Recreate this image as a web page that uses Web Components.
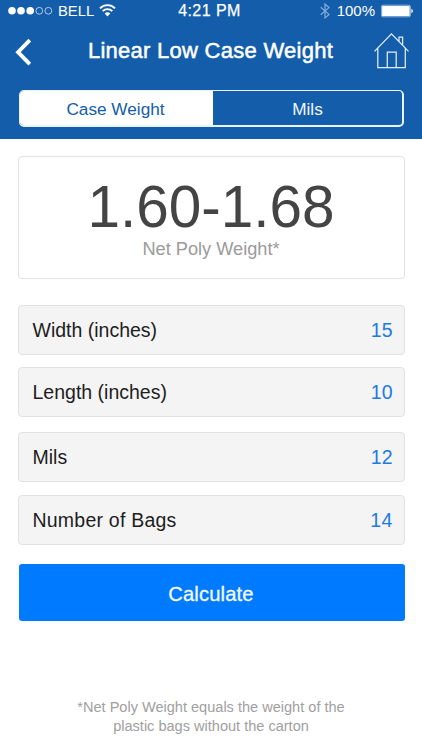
<!DOCTYPE html>
<html lang="en">
<head>
<meta charset="utf-8">
<title>Linear Low Case Weight</title>
<style>
  html, body { margin: 0; height: 100%; }
  body { background: #fff; font-family: "Liberation Sans", Arial, Helvetica, sans-serif; }
</style>
</head>
<body>
<case-weight-app></case-weight-app>
<script>
  function define(name, html) {
    const template = document.createElement('template');
    template.innerHTML = html;
    customElements.define(name, class extends HTMLElement {
      constructor() {
        super();
        this.attachShadow({ mode: 'open' }).append(template.content.cloneNode(true));
      }
    });
  }

  define('status-bar', `
    <style>
      :host { display: grid; grid-template-columns: 1fr auto 1fr; align-items: center; height: 20px; padding: 0 9px 0 8px; color: #fff; font-size: 15px; line-height: 20px; }
      svg { display: block; }
      .left, .right { display: flex; align-items: center; }
      .right { justify-content: flex-end; }
      .carrier { margin: 0 5px 0 5px; font-size: 14.8px; }
      .time { margin-right: 2px; padding-top: 1px; font-size: 16px; letter-spacing: .45px; -webkit-text-stroke: .25px #fff; }
      .percent { margin: 0 6px 0 7px; letter-spacing: 0; padding-top: 1px; }
    </style>
    <div class="left">
      <svg width="45" height="20" viewBox="0 0 45 20" fill="#fff">
        <circle cx="4" cy="9.8" r="3.8"/><circle cx="13" cy="9.8" r="3.8"/><circle cx="22.2" cy="9.8" r="3.8"/>
        <g fill="none" stroke="#d5e3f3" stroke-width=".8"><circle cx="31.3" cy="9.8" r="3.4"/><circle cx="40.4" cy="9.8" r="3.4"/></g>
      </svg>
      <span class="carrier">BELL</span>
      <svg width="17" height="20" viewBox="-.5 0 17 20" fill="none" stroke="#fff" stroke-width="1.9">
        <path d="M.5 7.3a10.4 10.4 0 0 1 15 0M3.2 10.1a6.8 6.8 0 0 1 9.6 0"/>
        <path d="M8 15.6 5.2 12.5a4 4 0 0 1 5.6 0z" fill="#fff" stroke="none"/>
      </svg>
    </div>
    <span class="time">4:21 PM</span>
    <div class="right">
      <svg width="10" height="20" viewBox="0 0 10 20" fill="none" stroke="#86add9" stroke-width="1.2"><path d="M.7 6.2 9 13.4 5 17V3l4 3.6L.7 13.8"/></svg>
      <span class="percent">100%</span>
      <svg width="32" height="20" viewBox="0 0 32 20"><rect x=".4" y="4.2" width="29" height="11.6" rx="1.6" fill="none" stroke="#bcd2ec" stroke-width=".8"/><rect x="1.1" y="4.9" width="27.6" height="10.2" rx=".7" fill="#fff"/><path d="M30.4 7.9c2 .6 2 3.6 0 4.2z" fill="#fff"/></svg>
    </div>`);

  define('nav-bar', `
    <style>
      :host { display: grid; grid-template-columns: 40px 1fr 40px; height: 70px; align-items: start; padding: 0 12px 0 15px; color: #fff; }
      svg { display: block; }
      .back { margin-top: 18px; }
      .home { margin-top: 12px; justify-self: end; margin-right: -1px; }
      h1 { margin: 18px 4px 0 0; font-size: 22px; line-height: 25px; font-weight: 400; letter-spacing: .27px; text-align: center; white-space: nowrap; -webkit-text-stroke: .5px #fff; }
    </style>
    <svg class="back" width="18" height="30" viewBox="0 0 18 30" fill="none" stroke="#fff" stroke-width="3.8"><path d="M14.8 2.2 3 14.2 14.8 26.2"/></svg>
    <h1><slot></slot></h1>
    <svg class="home" width="38" height="38" viewBox="0 0 38 38" fill="none" stroke="#e4eefa" stroke-width="1.25"><path d="M1.5 19.4 18.5 1.8 35.5 19.4M4.8 16.4V35.6H32.3V16.4M14.3 35.2V20H23.2V35.2M26 9V5.2H29.6V13"/></svg>`);

  define('segment-control', `
    <style>
      :host { display: grid; grid-template-columns: 193px 1fr; box-sizing: border-box; height: 37px; margin: 0 18px 0 19px; border: solid #eaf2fb; border-width: 1px 2px 2px 1px; border-radius: 5px; overflow: hidden; color: #f3f8ff; font-size: 17.2px; line-height: 36px; text-align: center; }
      .on { background: #fff; color: #135da9; padding-right: 2px; }
    </style>
    <span class="on"><slot name="selected"></slot></span><span><slot name="other"></slot></span>`);

  define('app-header', `
    <style>:host { display: block; box-sizing: border-box; height: 139px; background: #145dab; }</style>
    <slot></slot>`);

  define('result-card', `
    <style>
      :host { display: flex; flex-direction: column; align-items: center; box-sizing: border-box; height: 123px; margin: 17px 17px 26px 18px; border: 1px solid #e2e2e2; border-radius: 4px; padding-top: 18px; }
      .value { color: #444; font-size: 58.5px; line-height: 64px; margin-right: 1px; }
      .label { color: #9b9b9b; font-size: 18.2px; line-height: 20px; margin-right: 1px; }
    </style>
    <span class="value"><slot name="value"></slot></span><span class="label"><slot></slot></span>`);

  define('input-row', `
    <style>
      :host { display: flex; justify-content: space-between; align-items: center; box-sizing: border-box; height: 50px; margin: 0 17px 12px 18px; padding: 0 11.5px 0 13.5px; background: #f4f4f4; border: 1px solid #e2e2e2; border-radius: 4px; font-size: 19.5px; color: #1d1d1d; }
      .value { color: #2079e3; }
    </style>
    <span><slot></slot></span><span class="value"><slot name="value"></slot></span>`);

  define('primary-button', `
    <style>
      :host { display: block; margin: 19px 17px 0 19px; }
      button { display: block; width: 100%; height: 57px; border: 0; border-radius: 3px; padding: 2px 2px 0 0; background: #007aff; color: #f2faff; font: 20.2px/24px "Liberation Sans", Arial, sans-serif; letter-spacing: .15px; -webkit-text-stroke: .3px #f2faff; }
    </style>
    <button><slot></slot></button>`);

  define('foot-note', `
    <style>:host { display: block; margin-top: 77px; color: #a0a0a0; font-size: 14.55px; line-height: 19px; text-align: center; }</style>
    <slot></slot>`);

  define('case-weight-app', `
    <style>
      :host { display: block; width: 422px; height: 750px; overflow: hidden; background: #fff; }
      .gap { margin-bottom: 15px; }
      .wide { margin-bottom: 13px; }
      .bags { letter-spacing: .22px; }
    </style>
    <app-header>
      <status-bar></status-bar>
      <nav-bar>Linear Low Case Weight</nav-bar>
      <segment-control><span slot="selected">Case Weight</span><span slot="other">Mils</span></segment-control>
    </app-header>
    <result-card><span slot="value">1.60-1.68</span>Net Poly Weight*</result-card>
    <input-row>Width (inches)<span slot="value">15</span></input-row>
    <input-row class="gap">Length (inches)<span slot="value">10</span></input-row>
    <input-row class="wide">Mils<span slot="value">12</span></input-row>
    <input-row class="bags">Number of Bags<span slot="value">14</span></input-row>
    <primary-button>Calculate</primary-button>
    <foot-note>*Net Poly Weight equals the weight of the<br>plastic bags without the carton</foot-note>`);
</script>
</body>
</html>
